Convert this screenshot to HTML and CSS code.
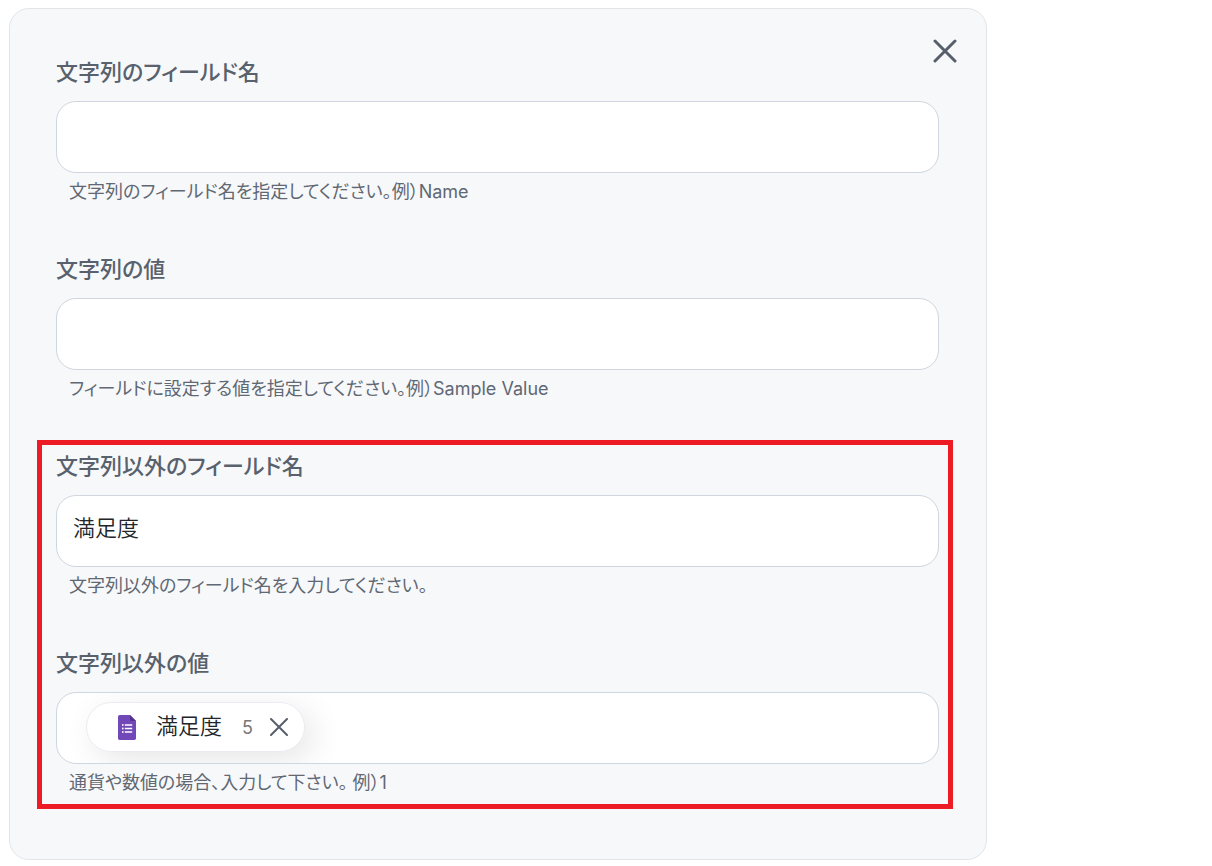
FILE: index.html
```html
<!DOCTYPE html>
<html lang="ja">
<head>
<meta charset="utf-8">
<meta name="viewport" content="width=device-width, initial-scale=1">
<title>フィールド設定</title>
<link rel="stylesheet" href="styles.css">
</head>
<body>
<form class="card">
  <button class="card-close" type="button" aria-label="閉じる">
    <svg class="card-close-icon" viewBox="0 0 24 24" aria-hidden="true"><path d="M2 2L22 22M22 2L2 22"/></svg>
  </button>
  <div class="field">
    <label class="label" for="text-name">文字列のフィールド名</label>
    <input class="control" id="text-name" type="text" aria-describedby="text-name-help">
    <p class="help" id="text-name-help">文字列のフィールド名を指定してください。例）Name</p>
  </div>
  <div class="field">
    <label class="label" for="text-value">文字列の値</label>
    <input class="control" id="text-value" type="text" aria-describedby="text-value-help">
    <p class="help" id="text-value-help">フィールドに設定する値を指定してください。例）Sample Value</p>
  </div>
  <div class="highlight">
    <div class="field">
      <label class="label" for="other-name">文字列以外のフィールド名</label>
      <input class="control" id="other-name" type="text" value="満足度" aria-describedby="other-name-help">
      <p class="help" id="other-name-help">文字列以外のフィールド名を入力してください。</p>
    </div>
    <div class="field">
      <label class="label" for="other-value">文字列以外の値</label>
      <div class="control token-control">
        <span class="chip">
          <svg class="chip-icon" viewBox="0 0 18 25" aria-hidden="true">
            <path fill="#7248b9" d="M1.700 0H12l6 6v17.300a1.700 1.700 0 0 1-1.700 1.700H1.700A1.700 1.700 0 0 1 0 23.300V1.700A1.700 1.700 0 0 1 1.700 0z"/>
            <path fill="#54318f" d="M12 0l6 6h-4.500A1.500 1.500 0 0 1 12 4.500z"/>
            <path fill="#fff" d="M6.800 9.300h7.400v1.500H6.800zM6.800 12.800h7.400v1.500H6.800zM6.800 16.300h7.400v1.500H6.800z"/>
            <circle cx="4.800" cy="10" r="0.900" fill="#fff"/><circle cx="4.800" cy="13.500" r="0.900" fill="#fff"/><circle cx="4.800" cy="17" r="0.900" fill="#fff"/>
          </svg>
          <span class="chip-text">満足度</span>
          <span class="chip-count">5</span>
          <button class="chip-remove" type="button" aria-label="満足度を削除">
            <svg class="chip-remove-icon" viewBox="0 0 18 18" aria-hidden="true"><path d="M1 1L17 17M17 1L1 17"/></svg>
          </button>
        </span>
        <input class="token-input" id="other-value" type="text" aria-describedby="other-value-help">
      </div>
      <p class="help" id="other-value-help">通貨や数値の場合、入力して下さい。 例）1</p>
    </div>
  </div>
</form>
</body>
</html>
```
FILE: styles.css
```css
* { box-sizing: border-box; }

body {
  margin: 8px 9px 6px;
  background: #fff;
  color: #222529;
  font-family: Inter, "Noto Sans CJK JP", sans-serif;
  font-feature-settings: "palt";
}

.card {
  position: relative;
  display: flex;
  flex-direction: column;
  gap: 47px;
  max-width: 978px;
  padding: 47px 47px 62px 46px;
  border: 1px solid #e2e4e7;
  border-radius: 20px;
  background: #f7f8fa;
}

.card-close {
  position: absolute;
  top: 25px;
  right: 24px;
  display: grid;
  place-items: center;
  width: 34px;
  height: 34px;
  padding: 0;
  border: 0;
  background: none;
}

.card-close-icon {
  width: 24px;
  height: 24px;
  fill: none;
  stroke: #565f6b;
  stroke-width: 3;
  stroke-linecap: round;
}

.field {
  display: flex;
  flex-direction: column;
}

.label {
  margin-bottom: 13px;
  color: #58616c;
  font-size: 22px;
  font-weight: 500;
  line-height: 32px;
}

.control {
  width: 100%;
  height: 72px;
  padding: 0 16px 10px;
  border: 1px solid #cfd6df;
  border-radius: 20px;
  background: #fff;
  color: inherit;
  font: inherit;
  font-size: 22px;
  font-weight: 350;
}

.help {
  margin: 5px 0 0 13px;
  color: #5f6873;
  font-size: 18px;
  line-height: 28px;
}

.highlight {
  position: relative;
  display: flex;
  flex-direction: column;
  gap: 47px;
}

.highlight::after {
  content: "";
  position: absolute;
  inset: -10px -14px -12px -19px;
  border: 5px solid #ed1c24;
  pointer-events: none;
}

.token-control {
  display: flex;
  align-items: center;
  gap: 8px;
  overflow: hidden;
  padding: 0 16px 2px 29px;
}

.chip {
  display: flex;
  flex: none;
  align-items: center;
  height: 50px;
  padding: 0 16px 0 31px;
  border: 1px solid #eaecf2;
  border-radius: 25px;
  background: #fff;
  box-shadow: 8px 8px 32px rgba(0, 0, 0, 0.1);
}

.chip-icon {
  width: 18px;
  height: 25px;
  margin-right: 20px;
}

.chip-text {
  margin-right: 20px;
  padding-bottom: 2px;
  font-size: 22px;
  line-height: 32px;
}

.chip-count {
  margin-right: 17px;
  color: #777;
  font-size: 18px;
  font-weight: 400;
}

.chip-remove {
  display: grid;
  padding: 0;
  border: 0;
  background: none;
}

.chip-remove-icon {
  width: 18px;
  height: 18px;
  fill: none;
  stroke: #565f6b;
  stroke-width: 2;
  stroke-linecap: round;
}

.token-input {
  flex: 1;
  min-width: 0;
  padding: 0;
  border: 0;
  background: none;
  font: inherit;
  font-size: 22px;
}
```
